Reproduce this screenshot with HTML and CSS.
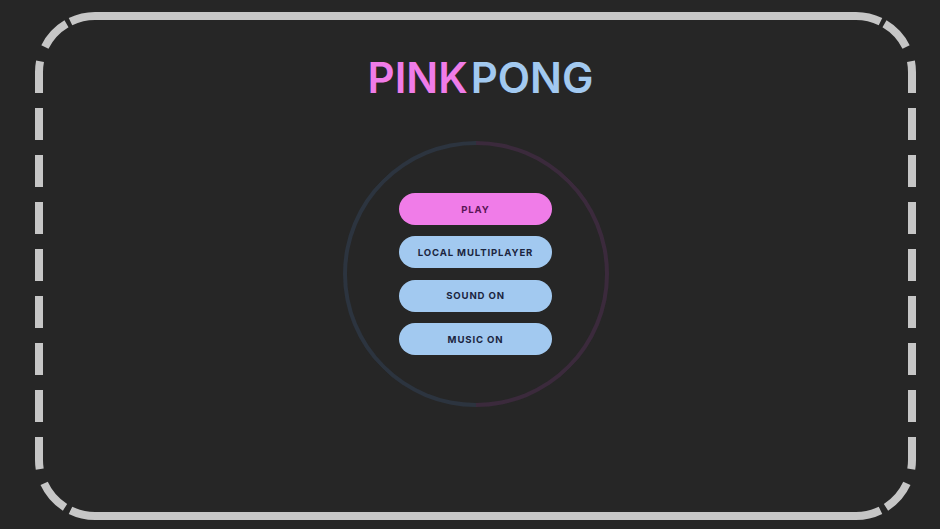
FILE: index.html
```html
<!DOCTYPE html>
<html>
<head>
<meta charset="utf-8">
<link rel="stylesheet" href="styles.css">
</head>
<body>
<div class="frame">
  <svg class="frame-border" viewBox="0 0 881 508" width="881" height="508" aria-hidden="true">
    <path class="solid" d="M 35.5 9.7 A 56 56 0 0 1 60 4 L 821 4 A 56 56 0 0 1 845.5 9.7"/>
    <path class="solid" d="M 35.5 498.3 A 56 56 0 0 0 60 504 L 821 504 A 56 56 0 0 0 845.5 498.3"/>
    <path class="dashed" d="M 32 11.5 A 56 56 0 0 0 4 60 L 4 448 A 56 56 0 0 0 32 496.5"/>
    <path class="dashed" d="M 849 11.5 A 56 56 0 0 1 877 60 L 877 448 A 56 56 0 0 1 849 496.5"/>
  </svg>
  <h1 class="title"><span class="pink">PINK</span><span class="blue">PONG</span></h1>
  <div class="menu">
    <div class="ring"></div>
    <button class="btn btn-pink">PLAY</button>
    <button class="btn">LOCAL MULTIPLAYER</button>
    <button class="btn">SOUND ON</button>
    <button class="btn">MUSIC ON</button>
  </div>
</div>
</body>
</html>
```
FILE: styles.css
```css
html, body {
  margin: 0;
  padding: 0;
  background: #262626;
  width: 940px;
  height: 529px;
  overflow: hidden;
  font-family: Inter, "Noto Sans", sans-serif;
}
.frame {
  position: relative;
  box-sizing: border-box;
  margin: 12px 0 0 35px;
  width: 881px;
  height: 508px;
  padding: 8px;
  display: flex;
  flex-direction: column;
  align-items: center;
}
.frame-border {
  position: absolute;
  left: 0;
  top: 0;
  pointer-events: none;
}
.frame-border path {
  fill: none;
  stroke: #c6c6c6;
  stroke-width: 8;
  stroke-linecap: butt;
}
.frame-border .dashed {
  stroke-dasharray: 32 15;
  stroke-dashoffset: 46.4;
}
.title {
  margin: 33px 0 0 10px;
  font-size: 42px;
  font-weight: 600;
  line-height: 50px;
  display: flex;
  gap: 3px;
}
.pink { color: #f07ce8; }
.blue { color: #a2c9f0; }
.menu {
  position: relative;
  margin-top: 90px;
  display: flex;
  flex-direction: column;
  gap: 11.4px;
  align-items: center;
}
.ring {
  position: absolute;
  left: 50%;
  top: 50%;
  width: 258px;
  height: 258px;
  margin: -133px 0 0 -133px;
  border: 4px solid #2c343f;
  border-top-color: #3b2a3c;
  border-right-color: #3b2a3c;
  border-radius: 50%;
  transform: rotate(45deg);
  pointer-events: none;
}
.btn {
  position: relative;
  width: 153px;
  height: 32px;
  border: none;
  border-radius: 16px;
  background: #a2c9f0;
  color: #1b2540;
  font-family: Inter, "Noto Sans", sans-serif;
  font-size: 9.6px;
  font-weight: 700;
  letter-spacing: 0.85px;
  padding: 0;
}
.btn-pink {
  background: #f07ce8;
  color: #5a1656;
}
```
